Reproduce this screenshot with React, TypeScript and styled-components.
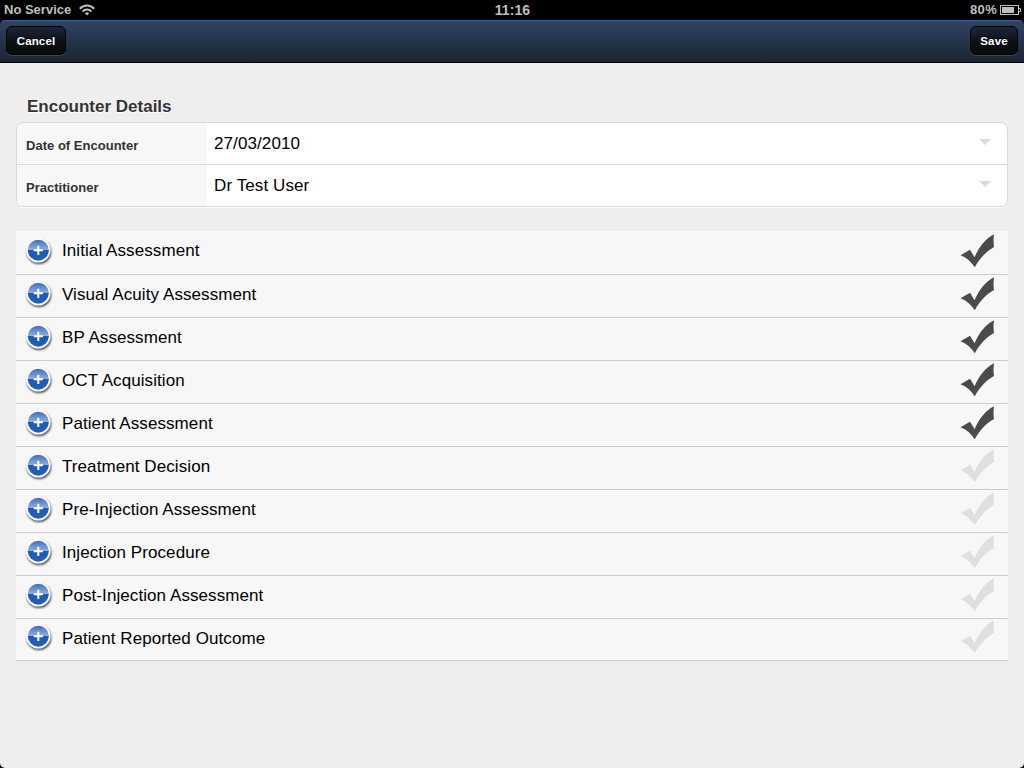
import React from "react";
import styled, { createGlobalStyle } from "styled-components";

const GlobalStyle = createGlobalStyle`
  * { box-sizing: border-box; }
  html, body { margin: 0; padding: 0; background: #000; }
  body { font-family: "Liberation Sans", Arial, Helvetica, sans-serif; }
`;

const Screen = styled.div`
  width: 1024px;
  height: 768px;
  display: flex;
  flex-direction: column;
  overflow: hidden;
  background: #000;
`;

const StatusBar = styled.header`
  height: 20px;
  display: grid;
  grid-template-columns: 1fr auto 1fr;
  align-items: center;
  padding: 0 3px 0 4px;
  color: #bfbfbf;
  font-size: 13px;
  font-weight: bold;
  line-height: 20px;
`;

const StatusGroup = styled.div<{ $end?: boolean }>`
  display: flex;
  align-items: center;
  justify-content: ${(p) => (p.$end ? "flex-end" : "flex-start")};
  gap: ${(p) => (p.$end ? 3 : 8)}px;
  letter-spacing: ${(p) => (p.$end ? 0.3 : 0)}px;
`;

const Clock = styled.time`
  font-size: 14px;
  letter-spacing: 0.1px;
`;

const Toolbar = styled.nav`
  height: 43px;
  display: flex;
  justify-content: space-between;
  align-items: flex-start;
  padding: 5px 6px 0;
  border-top: 1px solid #3e5d8a;
  border-bottom: 1px solid #000;
  border-radius: 5px 5px 0 0;
  background: linear-gradient(#2f4463, #1b2531);
`;

const ToolbarButton = styled.button<{ $width: number }>`
  width: ${(p) => p.$width}px;
  height: 29px;
  padding: 1px 0 0;
  border: 1px solid #000;
  border-radius: 6px;
  background: linear-gradient(#1c2739, #0b0f14 60%, #080b0f);
  box-shadow: 0 1px 0 rgba(255, 255, 255, 0.14);
  color: #fff;
  font: bold 11.5px/26px "Liberation Sans", Arial, sans-serif;
  letter-spacing: 0.15px;
  text-shadow: 0 -1px 0 #000;
`;

const Content = styled.main`
  flex: 1;
  padding: 34px 16px 0;
  background: #eee;
  border-radius: 0 0 5px 5px;
`;

const SectionTitle = styled.h1`
  margin: 0;
  padding-left: 11px;
  height: 25px;
  color: #333;
  font-size: 17px;
  line-height: 20px;
  text-shadow: 0 1px 0 #fff;
`;

const Fieldset = styled.section`
  height: 85px;
  margin-bottom: 24px;
  border: 1px solid #dadada;
  border-radius: 7px;
  background: #fff;
  box-shadow: 0 1px 0 #f8f8f8;
  overflow: hidden;
`;

const Field = styled.div`
  display: flex;
  height: 42px;
  border-bottom: 1px solid #dadada;
  &:last-child { border-bottom: 0; }
`;

const FieldLabel = styled.label`
  width: 190px;
  padding: 3px 0 0 9px;
  background: #f7f7f7;
  color: #333;
  font-size: 13px;
  font-weight: bold;
  line-height: 39px;
  letter-spacing: 0.02px;
`;

const FieldValue = styled.div`
  flex: 1;
  display: flex;
  justify-content: space-between;
  padding: 0 16px 0 7px;
  color: #000;
  font-size: 17px;
  line-height: 42px;
  letter-spacing: 0.1px;
`;

const DropArrow = styled.i`
  width: 0;
  height: 0;
  margin-top: 16px;
  border: 6px solid transparent;
  border-top-color: #dadada;
  border-bottom: 0;
`;

const StepList = styled.ul`
  margin: 0;
  padding: 0;
  list-style: none;
`;

const Step = styled.li`
  height: 43px;
  display: flex;
  align-items: flex-start;
  padding: 1px 12px 0 8px;
  background: #f7f7f7;
  border-bottom: 1px solid #cbcbcb;
  &:first-child { height: 44px; padding-top: 2px; }
  &:last-child { height: 42px; padding-top: 0; }
`;

const StepName = styled.span<{ $lineHeight: number }>`
  flex: 1;
  padding-left: 8px;
  color: #000;
  font-size: 17px;
  line-height: ${(p) => p.$lineHeight}px;
  letter-spacing: 0.08px;
`;

const steps: { name: string; done: boolean }[] = [
  { name: "Initial Assessment", done: true },
  { name: "Visual Acuity Assessment", done: true },
  { name: "BP Assessment", done: true },
  { name: "OCT Acquisition", done: true },
  { name: "Patient Assessment", done: true },
  { name: "Treatment Decision", done: false },
  { name: "Pre-Injection Assessment", done: false },
  { name: "Injection Procedure", done: false },
  { name: "Post-Injection Assessment", done: false },
  { name: "Patient Reported Outcome", done: false },
];

const lineHeightFor = (index: number) =>
  index === 0 ? 36 : index === steps.length - 1 ? 40 : 38;

const WifiIcon = () => (
  <svg width="16" height="12" viewBox="0 0 16 12" fill="none" stroke="#bfbfbf" strokeWidth="2">
    <path d="M0.8 4.8C4.8 0.5 11.2 0.5 15.2 4.8" />
    <path d="M3.6 7.5C6.2 4.9 9.8 4.9 12.4 7.5" />
    <path d="M5.8 9.2Q8 7.3 10.2 9.2L8 11.6Z" fill="#bfbfbf" stroke="none" />
  </svg>
);

const BatteryIcon = () => (
  <svg width="21" height="10" viewBox="0 0 21 10">
    <rect x="0.5" y="0.5" width="18" height="9" fill="none" stroke="#bfbfbf" />
    <rect x="2" y="2" width="12" height="6" fill="#bfbfbf" />
    <path d="M19 3.5H20.5V6.5H19" fill="none" stroke="#bfbfbf" />
  </svg>
);

const PlusIcon = () => (
  <svg width="30" height="34" viewBox="0 0 30 34">
    <defs>
      <linearGradient id="gloss" x1="0" y1="0" x2="0" y2="1">
        <stop offset="0" stopColor="#3d70bd" />
        <stop offset="0.49" stopColor="#92aedb" />
        <stop offset="0.5" stopColor="#1c5ab5" />
        <stop offset="1" stopColor="#2161b8" />
      </linearGradient>
      <filter id="soft" x="-30%" y="-30%" width="160%" height="160%">
        <feGaussianBlur stdDeviation="1.2" />
      </filter>
    </defs>
    <circle cx="15" cy="18.9" r="12.2" fill="#000" opacity="0.75" filter="url(#soft)" />
    <circle cx="14.3" cy="17.2" r="12.3" fill="#fff" />
    <circle cx="14.3" cy="17.2" r="10.5" fill="url(#gloss)" />
    <path d="M14.3 12.7V21.9M9.7 17.3H18.9" stroke="#fff" strokeWidth="2" />
  </svg>
);

const CheckIcon = ({ done }: { done: boolean }) => (
  <svg width="36" height="36" viewBox="0 0 36 36">
    <path
      d="M0.5 22.2L10 16.8L14.6 24.2C18.5 14.5 25.5 5.5 34 1.2C33.4 5.5 33.4 9.5 34 14C26 18.5 19.5 25.5 14.8 34.3C11.2 28.8 6.5 24.5 0.5 22.2Z"
      fill={done ? "#4b4b4b" : "#e0dfe0"}
    />
  </svg>
);

export default function App() {
  return (
    <Screen>
      <GlobalStyle />
      <StatusBar>
        <StatusGroup>
          <span>No Service</span>
          <WifiIcon />
        </StatusGroup>
        <Clock>11:16</Clock>
        <StatusGroup $end>
          <span>80%</span>
          <BatteryIcon />
        </StatusGroup>
      </StatusBar>
      <Toolbar>
        <ToolbarButton $width={60}>Cancel</ToolbarButton>
        <ToolbarButton $width={48}>Save</ToolbarButton>
      </Toolbar>
      <Content>
        <SectionTitle>Encounter Details</SectionTitle>
        <Fieldset>
          <Field>
            <FieldLabel>Date of Encounter</FieldLabel>
            <FieldValue>
              <span>27/03/2010</span>
              <DropArrow />
            </FieldValue>
          </Field>
          <Field>
            <FieldLabel>Practitioner</FieldLabel>
            <FieldValue>
              <span>Dr Test User</span>
              <DropArrow />
            </FieldValue>
          </Field>
        </Fieldset>
        <StepList>
          {steps.map((step, i) => (
            <Step key={step.name}>
              <PlusIcon />
              <StepName $lineHeight={lineHeightFor(i)}>{step.name}</StepName>
              <CheckIcon done={step.done} />
            </Step>
          ))}
        </StepList>
      </Content>
    </Screen>
  );
}
